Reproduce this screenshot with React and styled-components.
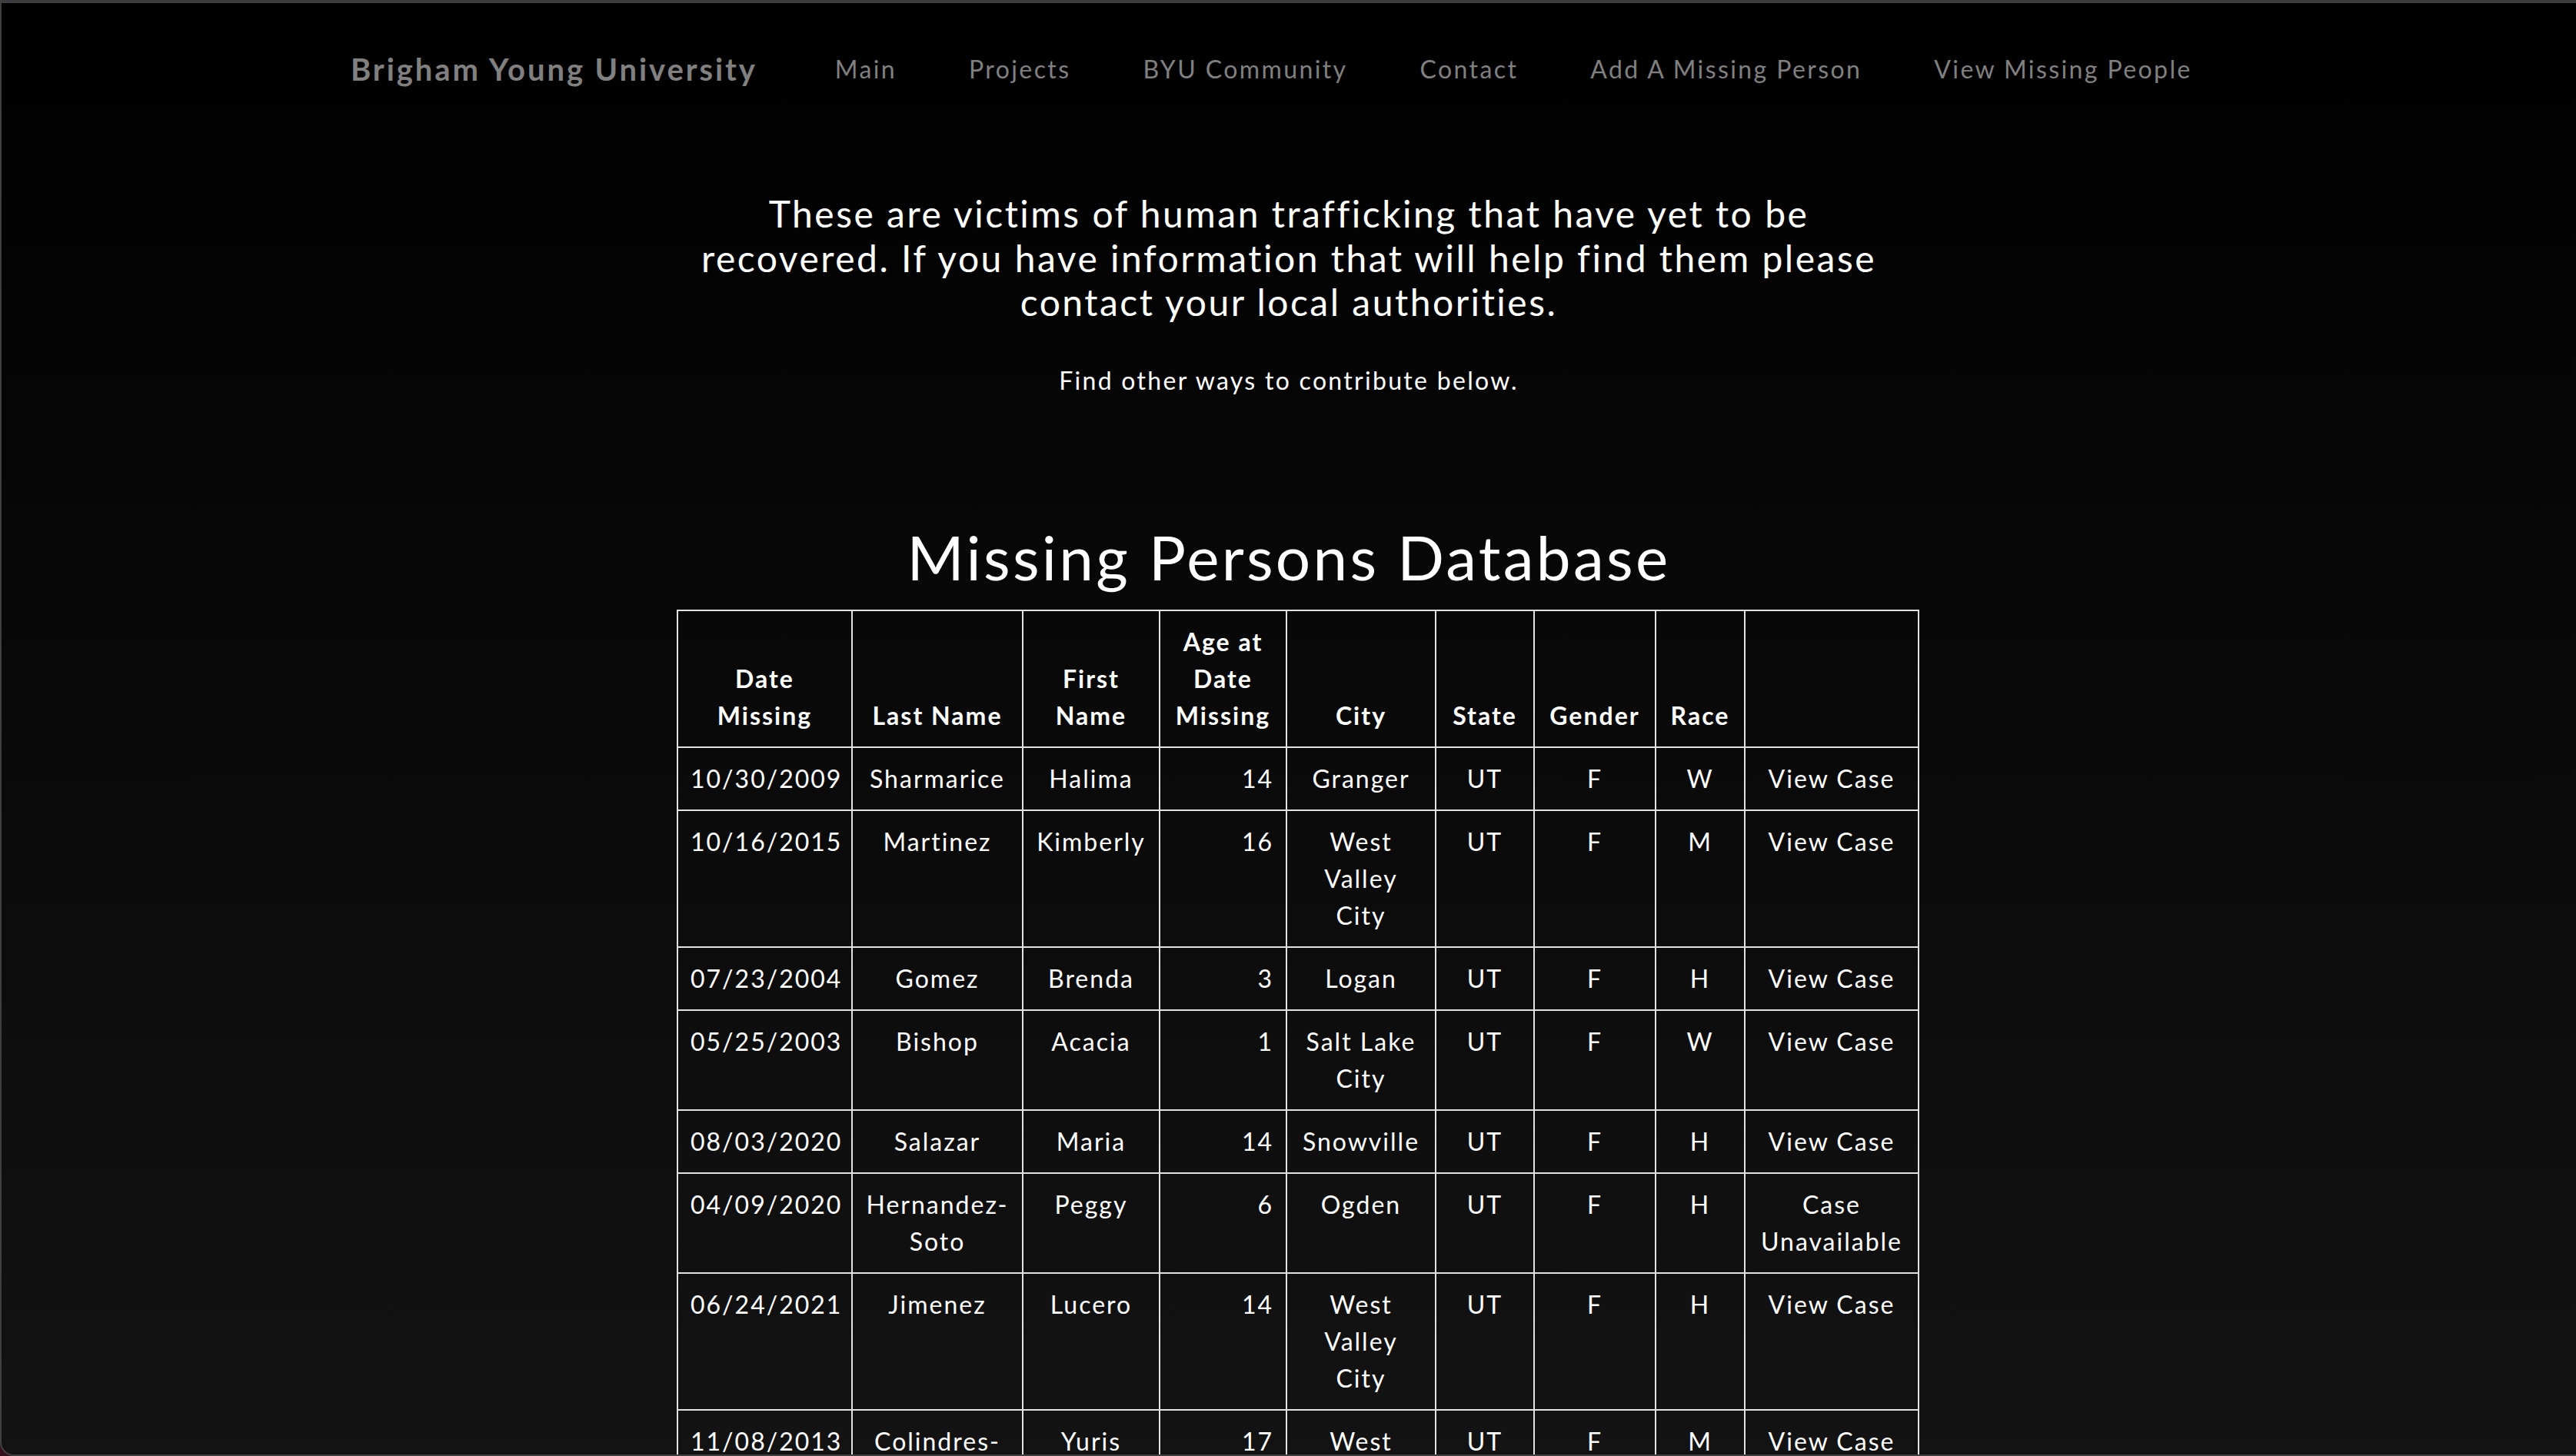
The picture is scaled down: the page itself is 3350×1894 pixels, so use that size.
import React from "react";
import styled, { createGlobalStyle } from "styled-components";

const missingPeople = [
  { date: "10/30/2009", last: "Sharmarice", first: "Halima", age: 14, city: "Granger", state: "UT", gender: "F", race: "W", hasCase: true },
  { date: "10/16/2015", last: "Martinez", first: "Kimberly", age: 16, city: "West Valley City", state: "UT", gender: "F", race: "M", hasCase: true },
  { date: "07/23/2004", last: "Gomez", first: "Brenda", age: 3, city: "Logan", state: "UT", gender: "F", race: "H", hasCase: true },
  { date: "05/25/2003", last: "Bishop", first: "Acacia", age: 1, city: "Salt Lake City", state: "UT", gender: "F", race: "W", hasCase: true },
  { date: "08/03/2020", last: "Salazar", first: "Maria", age: 14, city: "Snowville", state: "UT", gender: "F", race: "H", hasCase: true },
  { date: "04/09/2020", last: "Hernandez-Soto", first: "Peggy", age: 6, city: "Ogden", state: "UT", gender: "F", race: "H", hasCase: false },
  { date: "06/24/2021", last: "Jimenez", first: "Lucero", age: 14, city: "West Valley City", state: "UT", gender: "F", race: "H", hasCase: true },
  { date: "11/08/2013", last: "Colindres-Lopez", first: "Yuris", age: 17, city: "West Valley City", state: "UT", gender: "F", race: "M", hasCase: true },
];

const columns = [
  { label: "Date Missing", width: 227 },
  { label: "Last Name", width: 222 },
  { label: "First Name", width: 178 },
  { label: "Age at Date Missing", width: 165 },
  { label: "City", width: 194 },
  { label: "State", width: 128 },
  { label: "Gender", width: 158 },
  { label: "Race", width: 116 },
  { label: "", width: 226 },
];

const navItems = [
  "Main",
  "Projects",
  "BYU Community",
  "Contact",
  "Add A Missing Person",
  "View Missing People",
];

const App = () => {
  return (
    <>
      <GlobalStyle />
      <Frame>
        <Navbar>
          <Brand href="#">Brigham Young University</Brand>
          {navItems.map((item) => (
            <NavLink key={item} href="#">
              {item}
            </NavLink>
          ))}
        </Navbar>

        <Intro>
          <Lead>
            These are victims of human trafficking that have yet to be
            recovered. If you have information that will help find them please
            contact your local authorities.
          </Lead>
          <SubText>Find other ways to contribute below.</SubText>
        </Intro>

        <Title>Missing Persons Database</Title>

        <TableWrap>
          <PeopleTable>
            <colgroup>
              {columns.map((c, i) => (
                <col key={i} style={{ width: c.width }} />
              ))}
            </colgroup>
            <thead>
              <tr>
                {columns.map((c, i) => (
                  <HeadCell key={i}>{c.label}</HeadCell>
                ))}
              </tr>
            </thead>
            <tbody>
              {missingPeople.map((p, i) => (
                <tr key={i}>
                  <Cell>{p.date}</Cell>
                  <Cell>{p.last}</Cell>
                  <Cell>{p.first}</Cell>
                  <Cell $align="right">{p.age}</Cell>
                  <Cell>{p.city}</Cell>
                  <Cell>{p.state}</Cell>
                  <Cell>{p.gender}</Cell>
                  <Cell>{p.race}</Cell>
                  <Cell>
                    {p.hasCase ? (
                      <CaseLink href="#">View Case</CaseLink>
                    ) : (
                      "Case Unavailable"
                    )}
                  </Cell>
                </tr>
              ))}
            </tbody>
          </PeopleTable>
        </TableWrap>
      </Frame>
    </>
  );
};
export default App;

const GlobalStyle = createGlobalStyle`
  html, body {
    margin: 0;
    height: 100%;
    background: #35101c;
  }
  body {
    font-family: Lato, "Noto Sans", sans-serif;
    color: #fff;
  }
  #root {
    height: 100%;
  }
`;

const Frame = styled.div`
  height: 100vh;
  box-sizing: border-box;
  overflow: hidden;
  border-top: 4px solid #3e3e42;
  border-left: 2px solid #404040;
  border-bottom: 2px solid #404040;
  border-bottom-left-radius: 18px;
  background: linear-gradient(180deg, #000 0%, #131313 100%);
  letter-spacing: 2px;
`;

const Navbar = styled.nav`
  display: flex;
  align-items: center;
  width: 2440px;
  margin: 0 auto;
  padding-top: 56px;
  white-space: nowrap;
`;

const Brand = styled.a`
  flex: none;
  font-size: 40px;
  font-weight: 700;
  line-height: 60px;
  letter-spacing: 2.9px;
  color: #808080;
  text-decoration: none;
  margin-right: 54px;
`;

const NavLink = styled.a`
  flex: none;
  font-size: 32px;
  line-height: 48px;
  letter-spacing: 2.4px;
  color: #808080;
  text-decoration: none;
  padding: 0 47px;
`;

const Intro = styled.section`
  text-align: center;
  margin-top: 129px;
`;

const Lead = styled.p`
  font-size: 48px;
  line-height: 57.6px;
  letter-spacing: 2.5px;
  max-width: 1580px;
  margin: 0 auto;
`;

const SubText = styled.p`
  font-size: 32px;
  line-height: 48px;
  letter-spacing: 2.3px;
  margin: 49px 0 0;
`;

const Title = styled.h1`
  font-size: 80px;
  line-height: 96px;
  font-weight: 400;
  letter-spacing: 3.3px;
  text-align: center;
  margin: 157px 0 21px;
`;

const TableWrap = styled.div`
  display: flex;
  justify-content: center;
  padding-left: 24px;
`;

const PeopleTable = styled.table`
  border-collapse: collapse;
  table-layout: fixed;
  width: 1614px;
  font-size: 32px;
  line-height: 48px;
`;

const HeadCell = styled.th`
  border: 2px solid #e2e2e2;
  padding: 16px;
  font-weight: 700;
  text-align: center;
  vertical-align: bottom;
`;

const Cell = styled.td`
  border: 2px solid #e2e2e2;
  padding: 16px;
  text-align: ${(p) => p.$align || "center"};
  vertical-align: top;
`;

const CaseLink = styled.a`
  color: #fff;
  text-decoration: none;
`;
